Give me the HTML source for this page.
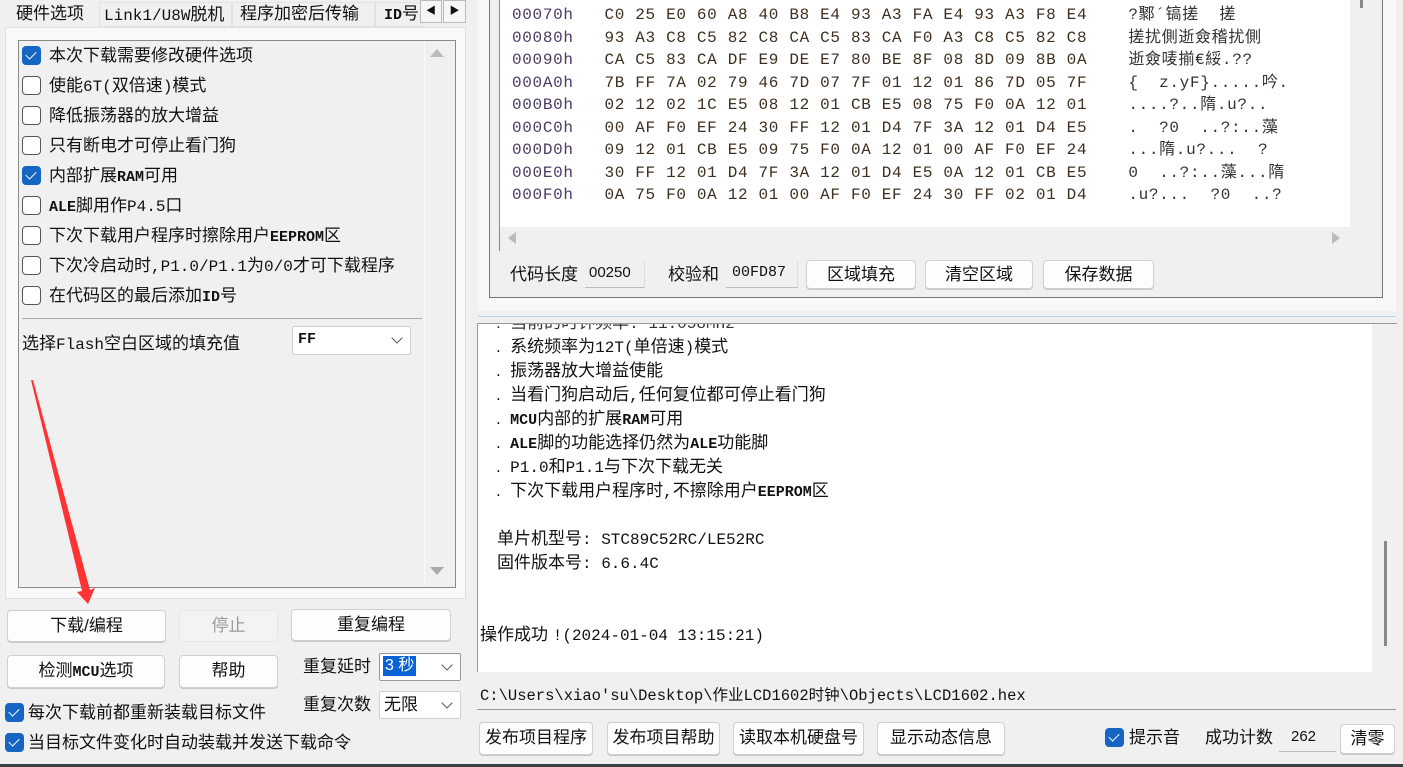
<!DOCTYPE html>
<html><head><meta charset="utf-8"><style>
*{box-sizing:border-box;margin:0;padding:0}
body{width:1403px;height:767px;overflow:hidden;background:#f0f0f0;position:relative;font-family:"Liberation Sans","Noto Sans CJK SC",sans-serif;color:#111}
.a{position:absolute;white-space:nowrap}
.cn{font-family:"Liberation Sans","Noto Sans CJK SC",sans-serif;font-size:17px;line-height:22px}
.mono{font-family:"Liberation Mono","Noto Sans CJK SC",monospace}
.m{font-family:"Liberation Mono",monospace;font-size:16px}
.m2{font-family:"Liberation Mono",monospace;font-size:15px;font-weight:bold}
.btn{position:absolute;background:#fdfdfd;border:1px solid #d0d0d0;border-radius:4px;text-align:center;font-size:17px;line-height:30px;box-shadow:0 1px 0 #c8c8c8}
.cb{position:absolute;width:19px;height:19px;border:1.5px solid #555;border-radius:4px;background:#fff}
.cb.on{background:#1664c4;border-color:#1664c4}
.cb.on:after{content:"";position:absolute;left:5px;top:2px;width:5px;height:9px;border:solid #fff;border-width:0 1.6px 1.6px 0;transform:rotate(45deg)}
.hex{font-family:"Liberation Mono","Noto Sans CJK SC",monospace;font-size:16px;letter-spacing:0.67px;color:#3e3020;position:absolute;left:512px;white-space:pre;line-height:22.5px}
.sel{position:absolute;background:#fff;border:1px solid #cfcfcf;border-radius:2px}
.chev{position:absolute;right:9px;top:7px;width:8px;height:8px;border:solid #555;border-width:0 1.3px 1.3px 0;transform:rotate(45deg)}
</style></head><body>

<div class="a cn" style="left:16px;top:3px;font-size:17px">硬件选项</div>
<div class="a" style="left:99px;top:2px;width:133px;height:25px;background:#f0f0f0;border:1px solid #e2e2e2"></div>
<div class="a cn" style="left:104px;top:4px"><span class="m">Link1/U8W</span>脱机</div>
<div class="a" style="left:232px;top:2px;width:143px;height:25px;border:1px solid #e2e2e2"></div>
<div class="a cn" style="left:240px;top:3px">程序加密后传输</div>
<div class="a" style="left:375px;top:2px;width:48px;height:25px;border:1px solid #e2e2e2"></div>
<div class="a cn" style="left:384px;top:3px"><span class="m2">ID</span>号</div>
<div class="a" style="left:420px;top:0;width:22px;height:23px;background:#f6f6f6;border:1px solid #bbb;font-size:10px;text-align:center;line-height:21px">◀</div>
<div class="a" style="left:443px;top:0;width:23px;height:23px;background:#f6f6f6;border:1px solid #bbb;font-size:10px;text-align:center;line-height:21px">▶</div>

<div class="a" style="left:5px;top:27px;width:461px;height:572px;background:#f9f9f9;border:1px solid #e0e0e0"></div>
<div class="a" style="left:18px;top:40px;width:438px;height:548px;background:#f0f0f0;border:1px solid #8a8a8a"></div>
<div class="a" style="left:424px;top:42px;width:1px;height:544px;background:#fafafa"></div>
<div class="a" style="left:430px;top:49px;width:0;height:0;border-left:7px solid transparent;border-right:7px solid transparent;border-bottom:8px solid #bbb"></div>
<div class="a" style="left:430px;top:567px;width:0;height:0;border-left:7px solid transparent;border-right:7px solid transparent;border-top:8px solid #aaa"></div>

<div class="cb on" style="left:22px;top:46px"></div><div class="a cn" style="left:49px;top:45px">本次下载需要修改硬件选项</div>
<div class="cb" style="left:22px;top:76px"></div><div class="a cn" style="left:49px;top:75px">使能<span class="m">6T(</span>双倍速<span class="m">)</span>模式</div>
<div class="cb" style="left:22px;top:106px"></div><div class="a cn" style="left:49px;top:105px">降低振荡器的放大增益</div>
<div class="cb" style="left:22px;top:136px"></div><div class="a cn" style="left:49px;top:135px">只有断电才可停止看门狗</div>
<div class="cb on" style="left:22px;top:166px"></div><div class="a cn" style="left:49px;top:165px">内部扩展<span class="m2">RAM</span>可用</div>
<div class="cb" style="left:22px;top:196px"></div><div class="a cn" style="left:49px;top:195px"><span class="m2">ALE</span>脚用作<span class="m">P4.5</span>口</div>
<div class="cb" style="left:22px;top:226px"></div><div class="a cn" style="left:49px;top:225px">下次下载用户程序时擦除用户<span class="m2">EEPROM</span>区</div>
<div class="cb" style="left:22px;top:256px"></div><div class="a cn" style="left:49px;top:255px">下次冷启动时<span class="m">,P1.0/P1.1</span>为<span class="m">0/0</span>才可下载程序</div>
<div class="cb" style="left:22px;top:286px"></div><div class="a cn" style="left:49px;top:285px">在代码区的最后添加<span class="m2">ID</span>号</div>
<div class="a" style="left:22px;top:318px;width:400px;height:1px;background:#a8a8a8"></div>
<div class="a cn" style="left:22px;top:333px">选择<span class="m">Flash</span>空白区域的填充值</div>
<div class="sel" style="left:292px;top:326px;width:119px;height:29px"><span class="a m2" style="left:5px;top:4px">FF</span><div class="chev"></div></div>

<svg class="a" style="left:0;top:0" width="470" height="610"><polygon points="31,380 33,380 90,590 95,588 88,604 77,592 82,591" fill="#f33"/></svg>

<div class="btn" style="left:7px;top:610px;width:159px;height:32px">下载/编程</div>
<div class="btn" style="left:179px;top:610px;width:99px;height:32px;background:#f3f3f3;color:#9a9a9a;box-shadow:none;border-color:#e6e6e6">停止</div>
<div class="btn" style="left:291px;top:609px;width:160px;height:32px">重复编程</div>
<div class="btn" style="left:7px;top:655px;width:158px;height:33px">检测<span class="m2">MCU</span>选项</div>
<div class="btn" style="left:179px;top:655px;width:99px;height:33px">帮助</div>
<div class="a cn" style="left:303px;top:656px">重复延时</div>
<div class="sel" style="left:379px;top:653px;width:82px;height:28px;border-color:#999"><span class="a cn" style="left:3px;top:2px;background:#0a63d6;color:#fff;font-size:16px;line-height:20px;padding:0 2px">3 秒</span><div class="chev"></div></div>
<div class="a cn" style="left:303px;top:694px">重复次数</div>
<div class="sel" style="left:379px;top:691px;width:82px;height:28px"><span class="a cn" style="left:4px;top:2px">无限</span><div class="chev"></div></div>
<div class="cb on" style="left:5px;top:703px"></div><div class="a cn" style="left:28px;top:702px">每次下载前都重新装载目标文件</div>
<div class="cb on" style="left:5px;top:733px"></div><div class="a cn" style="left:28px;top:732px">当目标文件变化时自动装载并发送下载命令</div>

<div class="a" style="left:478px;top:0;width:918px;height:311px;background:#f8f8f8"></div>
<div class="a" style="left:489px;top:-2px;width:894px;height:300px;border:1px solid #777;border-top:none;background:#f0f0f0"></div>
<div class="a" style="left:499px;top:0;width:876px;height:251px;border-left:1px solid #888;background:#fff"></div>
<div class="a" style="left:500px;top:227px;width:850px;height:24px;background:#f0f0f0"></div>
<div class="a" style="left:1350px;top:0;width:25px;height:251px;background:#f0f0f0"></div>
<div class="a" style="left:1360px;top:0;width:3px;height:8px;background:#888"></div>
<div class="a" style="left:508px;top:232px;width:0;height:0;border-top:6px solid transparent;border-bottom:6px solid transparent;border-right:8px solid #bbb"></div>
<div class="a" style="left:1332px;top:232px;width:0;height:0;border-top:6px solid transparent;border-bottom:6px solid transparent;border-left:8px solid #bbb"></div>
<div class="hex" style="top:4px"><span style="color:#4a3a64">00070h</span>   C0 25 E0 60 A8 40 B8 E4 93 A3 FA E4 93 A3 F8 E4    <span style="color:#333">?鄹´镐搓  搓</span>
<span style="color:#4a3a64">00080h</span>   93 A3 C8 C5 82 C8 CA C5 83 CA F0 A3 C8 C5 82 C8    <span style="color:#333">搓扰側逝僉稽扰側</span>
<span style="color:#4a3a64">00090h</span>   CA C5 83 CA DF E9 DE E7 80 BE 8F 08 8D 09 8B 0A    <span style="color:#333">逝僉唛揃€綏.??</span>
<span style="color:#4a3a64">000A0h</span>   7B FF 7A 02 79 46 7D 07 7F 01 12 01 86 7D 05 7F    <span style="color:#333">{  z.yF}.....吟.</span>
<span style="color:#4a3a64">000B0h</span>   02 12 02 1C E5 08 12 01 CB E5 08 75 F0 0A 12 01    <span style="color:#333">....?..隋.u?..</span>
<span style="color:#4a3a64">000C0h</span>   00 AF F0 EF 24 30 FF 12 01 D4 7F 3A 12 01 D4 E5    <span style="color:#333">.  ?0  ..?:..藻</span>
<span style="color:#4a3a64">000D0h</span>   09 12 01 CB E5 09 75 F0 0A 12 01 00 AF F0 EF 24    <span style="color:#333">...隋.u?...  ?</span>
<span style="color:#4a3a64">000E0h</span>   30 FF 12 01 D4 7F 3A 12 01 D4 E5 0A 12 01 CB E5    <span style="color:#333">0  ..?:..藻...隋</span>
<span style="color:#4a3a64">000F0h</span>   0A 75 F0 0A 12 01 00 AF F0 EF 24 30 FF 02 01 D4    <span style="color:#333">.u?...  ?0  ..?</span></div>

<div class="a cn" style="left:510px;top:264px">代码长度</div>
<div class="a" style="left:585px;top:261px;width:60px;height:27px;background:#f0f0f0;border-bottom:1px solid #bbb;border-right:1px solid #ddd;font-size:15px;line-height:24px;padding-left:4px">00250</div>
<div class="a cn" style="left:668px;top:264px">校验和</div>
<div class="a mono" style="left:726px;top:261px;width:72px;height:27px;border-bottom:1px solid #bbb;border-right:1px solid #ddd;font-size:15px;line-height:24px;padding-left:6px">00FD87</div>
<div class="btn" style="left:806px;top:260px;width:110px;height:29px;line-height:27px">区域填充</div>
<div class="btn" style="left:925px;top:260px;width:108px;height:29px;line-height:27px">清空区域</div>
<div class="btn" style="left:1043px;top:260px;width:111px;height:29px;line-height:27px">保存数据</div>

<div class="a" style="left:478px;top:316px;width:918px;height:1px;background:#b9d3e8"></div>

<div class="a" style="left:477px;top:323px;width:920px;height:349px;background:#fff;border:1px solid #999;border-right:none;border-bottom:none;overflow:hidden">
<div class="a" style="left:894px;top:0;width:25px;height:349px;background:#f0f0f0"></div>
<div class="a" style="left:906px;top:217px;width:3px;height:105px;background:#888"></div>
<div class="a cn" style="left:18px;top:-12px;color:#333">.&nbsp; 当前的时钟频率<span class="m">: 11.058MHz</span></div>
<div class="a cn" style="left:18px;top:12px">.&nbsp; 系统频率为<span class="m">12T(</span>单倍速<span class="m">)</span>模式</div>
<div class="a cn" style="left:18px;top:36px">.&nbsp; 振荡器放大增益使能</div>
<div class="a cn" style="left:18px;top:60px">.&nbsp; 当看门狗启动后<span class="m">,</span>任何复位都可停止看门狗</div>
<div class="a cn" style="left:18px;top:84px">.&nbsp; <span class="m2">MCU</span>内部的扩展<span class="m2">RAM</span>可用</div>
<div class="a cn" style="left:18px;top:108px">.&nbsp; <span class="m2">ALE</span>脚的功能选择仍然为<span class="m2">ALE</span>功能脚</div>
<div class="a cn" style="left:18px;top:132px">.&nbsp; <span class="m">P1.0</span>和<span class="m">P1.1</span>与下次下载无关</div>
<div class="a cn" style="left:18px;top:156px">.&nbsp; 下次下载用户程序时<span class="m">,</span>不擦除用户<span class="m2">EEPROM</span>区</div>
<div class="a cn" style="left:19px;top:204px">单片机型号<span class="m">: STC89C52RC/LE52RC</span></div>
<div class="a cn" style="left:19px;top:228px">固件版本号<span class="m">: 6.6.4C</span></div>
<div class="a cn" style="left:2px;top:300px">操作成功 <span class="m">!(2024-01-04 13:15:21)</span></div>
</div>

<div class="a" style="left:477px;top:684px;width:919px;height:26px;border-bottom:1px solid #999;background:#f0f0f0;font-family:'Liberation Mono','Noto Sans CJK SC',monospace;font-size:15.5px;line-height:24px;padding-left:3px">C:\Users\xiao'su\Desktop\作业LCD1602时钟\Objects\LCD1602.hex</div>

<div class="btn" style="left:479px;top:722px;width:114px;height:33px">发布项目程序</div>
<div class="btn" style="left:607px;top:722px;width:113px;height:33px">发布项目帮助</div>
<div class="btn" style="left:733px;top:722px;width:131px;height:33px">读取本机硬盘号</div>
<div class="btn" style="left:877px;top:722px;width:128px;height:33px">显示动态信息</div>
<div class="cb on" style="left:1105px;top:728px"></div><div class="a cn" style="left:1129px;top:727px">提示音</div>
<div class="a cn" style="left:1205px;top:727px">成功计数</div>
<div class="a" style="left:1279px;top:724px;width:57px;height:28px;border-bottom:1px solid #bbb;font-size:15px;line-height:26px;padding-left:12px">262</div>
<div class="btn" style="left:1340px;top:724px;width:55px;height:30px;line-height:28px">清零</div>

<div class="a" style="left:0;top:764px;width:1403px;height:3px;background:#3a3f48"></div>
</body></html>
